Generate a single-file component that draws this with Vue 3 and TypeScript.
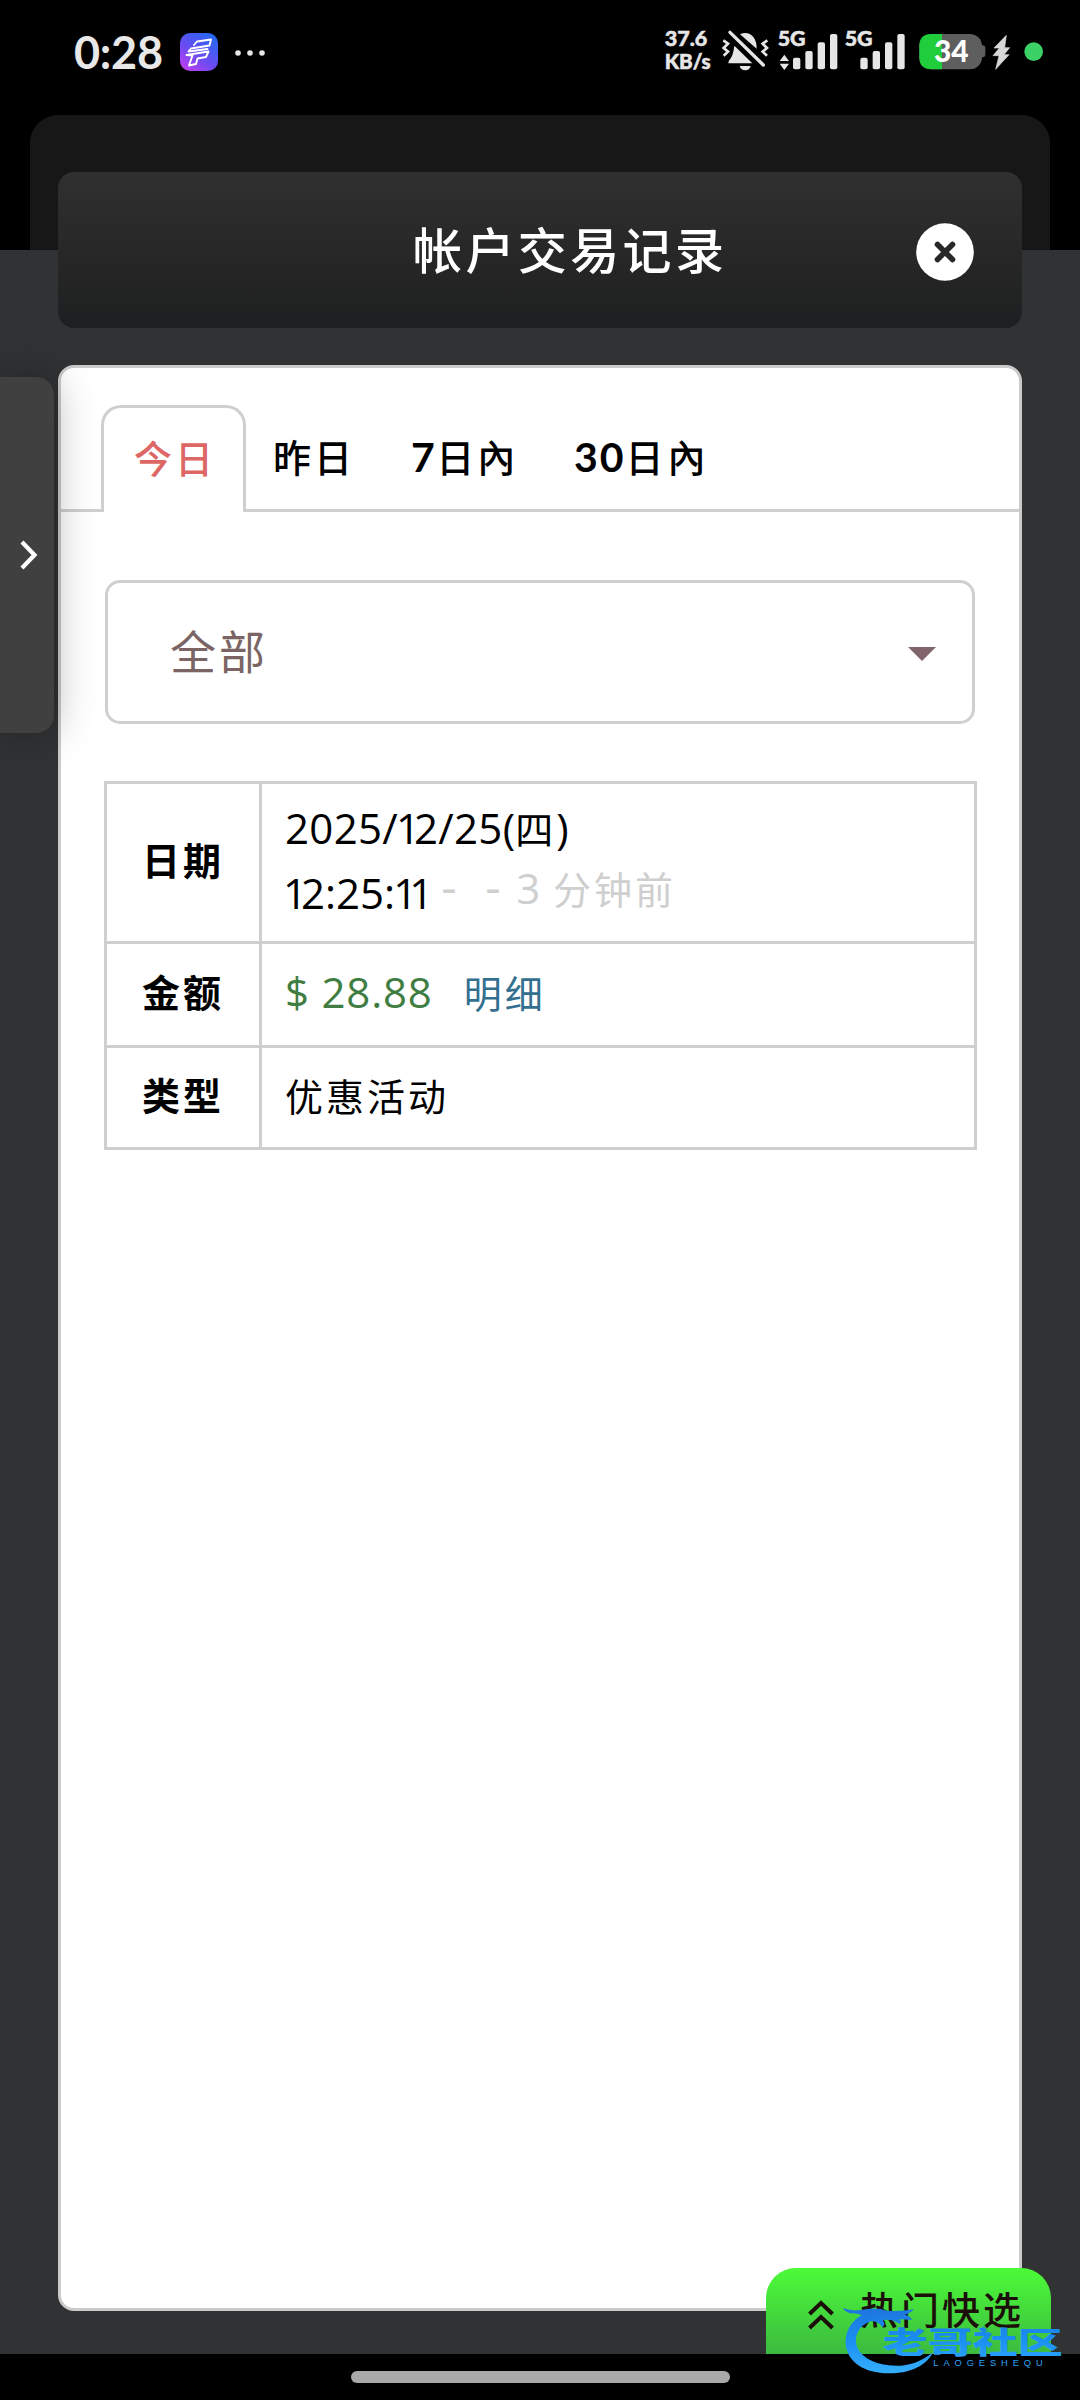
<script setup lang="ts">
import { ref } from 'vue'

interface Tab {
  id: string
  num: string
  label: string
}

const tabs: Tab[] = [
  { id: 'today', num: '', label: '今日' },
  { id: 'yesterday', num: '', label: '昨日' },
  { id: 'week', num: '7', label: '日內' },
  { id: 'month', num: '30', label: '日內' },
]
const active = ref<string>('today')

// the digit 1 is set tighter than the tabular figures around it
const pieces = (s: string): string[] => s.split(/(1)/).filter((p) => p !== '')
const day = pieces('2025/12/25(')
const time = pieces('12:25:11')
</script>

<template>
  <div class="screen">
    <header class="status">
      <span class="clock">0:28</span>
      <svg class="app-icon" viewBox="0 0 38 38">
        <defs>
          <linearGradient id="app-bg" x1="0.1" y1="1" x2="0.8" y2="0">
            <stop offset="0" stop-color="#c43cf0" />
            <stop offset="0.45" stop-color="#6a4cf2" />
            <stop offset="1" stop-color="#2468f0" />
          </linearGradient>
        </defs>
        <rect width="38" height="38" rx="10" fill="url(#app-bg)" />
        <g fill="none" stroke="#fff" stroke-width="1.9" stroke-linejoin="round" stroke-linecap="round">
          <path d="M14 12 L17 8.500 L31 6.500 L29.500 12.500 L11 15.500 L8.500 18.500 L27.500 16" />
          <path d="M6.500 22 L28.500 18.500 L26 24 L17.500 25.500 L16 31 L9 32.500 L12.500 22.500 L6.500 22" />
        </g>
      </svg>
      <svg class="dots" viewBox="0 0 30 6">
        <circle cx="3" cy="3" r="2.800" /><circle cx="15" cy="3" r="2.800" /><circle cx="27" cy="3" r="2.800" />
      </svg>
      <svg class="indicators" viewBox="0 0 1320 345" fill="#e6e6e6">
        <g class="net">
          <text x="74" y="138" font-size="65" textLength="128" lengthAdjust="spacingAndGlyphs">37.6</text>
          <text x="74" y="208" font-size="60" textLength="138" lengthAdjust="spacingAndGlyphs">KB/s</text>
          <text x="413" y="138" font-size="65" textLength="84" lengthAdjust="spacingAndGlyphs">5G</text>
          <text x="614" y="138" font-size="65" textLength="84" lengthAdjust="spacingAndGlyphs">5G</text>
        </g>
        <path d="M300 103 C326 90 351 110 350 146 Z" />
        <path d="M283 137 L337 190 H265 Q264 184 270 178 Q280 165 283 137 Z" />
        <path d="M299 198 H332 Q328 211 316 211 Q303 211 299 198 Z" />
        <path d="M270 97 L370 195" stroke="#e6e6e6" stroke-width="10" stroke-linecap="round" />
        <g fill="none" stroke="#e6e6e6" stroke-width="8" stroke-linejoin="miter">
          <path d="M250 121 L264 131 L251 144 L264 155 L251 167" />
          <path d="M382 121 L368 131 L381 144 L368 155 L381 167" />
        </g>
        <path d="M433 164 L447 183 H419 Z M419 191 H447 L433 210 Z" />
        <rect x="459" y="173" width="22" height="35" rx="6" />
        <rect x="496" y="153" width="22" height="55" rx="6" />
        <rect x="533" y="127" width="22" height="81" rx="6" />
        <rect x="570" y="102" width="22" height="106" rx="6" />
        <rect x="661" y="173" width="22" height="35" rx="6" />
        <rect x="698" y="153" width="22" height="55" rx="6" />
        <rect x="735" y="127" width="22" height="81" rx="6" />
        <rect x="772" y="102" width="22" height="106" rx="6" />
        <path d="M1022 136 H1028 Q1036 136 1036 146 V162 Q1036 172 1028 172 H1022 Z" fill="#5e5e5e" />
        <rect x="838" y="102" width="188" height="106" rx="36" fill="#5e5e5e" />
        <path d="M906 102 H874 Q838 102 838 138 V172 Q838 208 874 208 H906 Z" fill="#20cd3b" />
        <text class="pct" x="882" y="187" font-size="90" textLength="104" lengthAdjust="spacingAndGlyphs">34</text>
        <path d="M1099 106 L1062 144 H1078 L1059 167 H1077 L1067 208 L1107 164 H1092 L1109 143 H1094 Z" fill="#d8d8d8" stroke="#d8d8d8" stroke-width="2" />
        <circle cx="1181" cy="155" r="28" fill="#3bd167" />
      </svg>
    </header>

    <div class="sheet">
      <div class="title-bar">
        <h1>帐户交易记录</h1>
        <svg class="close" viewBox="0 0 58 58">
          <circle cx="29" cy="29" r="28.800" fill="#fff" />
          <path d="M21.500 21.500 L36.500 36.500 M36.500 21.500 L21.500 36.500" stroke="#282828" stroke-width="5.600" stroke-linecap="round" />
        </svg>
      </div>
    </div>

    <main class="card">
      <nav class="tabs">
        <button
          v-for="t in tabs"
          :key="t.id"
          class="tab"
          :class="[t.id, { active: t.id === active }]"
          @click="active = t.id"
        ><span v-if="t.num" class="num">{{ t.num }}</span>{{ t.label }}</button>
        <span class="rest"></span>
      </nav>

      <div class="select">
        <span>全部</span>
        <svg viewBox="0 0 28 14"><path d="M0 0 H28 L14 14 Z" fill="#80656a" /></svg>
      </div>

      <div class="table">
        <div class="row date">
          <div class="th">日期</div>
          <div class="td">
            <div class="line day"><span class="num"><span v-for="(p, i) in day" :key="i" :class="{ one: p === '1' }">{{ p }}</span></span>四<span class="num">)</span></div>
            <div class="line"><span class="num time"><span v-for="(p, i) in time" :key="i" :class="{ one: p === '1' }">{{ p }}</span></span><span class="ago"><i>-</i><i>-</i><span class="num">3</span> <b>分钟前</b></span></div>
          </div>
        </div>
        <div class="row amount">
          <div class="th">金额</div>
          <div class="td"><span class="num money">$ 28.88</span><a>明细</a></div>
        </div>
        <div class="row kind">
          <div class="th">类型</div>
          <div class="td">优惠活动</div>
        </div>
      </div>
    </main>

    <aside class="drawer">
      <svg viewBox="0 0 18 30"><path d="M2 2 L14.500 15 L2 28" fill="none" stroke="#fff" stroke-width="4.200" /></svg>
    </aside>

    <div class="hot">
      <svg viewBox="0 0 26 30"><path d="M1.500 14 L13 3 L24.500 14 M1.500 28 L13 17 L24.500 28" fill="none" stroke="#1c0f0a" stroke-width="4" /></svg>
      <span>热门快选</span>
    </div>

    <footer class="gesture"><span></span></footer>

    <svg class="mark" viewBox="0 0 1020 480">
      <defs>
        <linearGradient id="mark-fill" x1="0" y1="200" x2="0" y2="400" gradientUnits="userSpaceOnUse">
          <stop offset="0" stop-color="#1d74dc" />
          <stop offset="0.5" stop-color="#1a8ff2" />
          <stop offset="1" stop-color="#35aefc" />
        </linearGradient>
      </defs>
      <g fill="url(#mark-fill)">
        <path d="M368 224 C290 262 290 398 448 400 C512 400 562 374 578 338 C536 370 494 382 446 376 C340 362 316 284 392 236 Z" />
        <path d="M308 204 Q336 214 362 210 Q410 200 440 212 Q480 216 522 208 Q512 220 494 224 Q512 228 516 240 Q494 238 478 238 Q486 246 480 252 Q450 234 428 242 Q438 250 428 262 Q412 240 392 244 Q368 252 352 274 Q352 246 376 230 Q350 218 330 220 Q314 214 308 204 Z" />
        <text class="mark-cjk" x="428" y="338" font-size="88" textLength="540" lengthAdjust="spacingAndGlyphs">老哥社区</text>
        <text class="mark-en" x="580" y="378" font-size="28" textLength="328">LAOGESHEQU</text>
      </g>
    </svg>
  </div>
</template>

<style>
body { background: #000; }
</style>

<style scoped>
.screen {
  position: relative;
  width: 1080px;
  height: 2400px;
  overflow: hidden;
  display: flex;
  flex-direction: column;
  background: linear-gradient(#000 0 250px, #313234 250px 2354px, #000 2354px);
  font-family: "Lato", "Noto Sans CJK SC", sans-serif;
  color: #000;
}
.status { display: flex; height: 115px; flex: none; }
.clock {
  width: 106px;
  margin-left: 74px;
  font-size: 45px;
  font-weight: 700;
  letter-spacing: -0.3px;
  line-height: 104px;
  color: #e8e8e8;
}
.app-icon { width: 38px; height: 38px; margin-top: 33px; }
.dots { width: 30px; height: 6px; margin: 49.500px 0 0 17px; fill: #e6e6e6; }
.indicators { width: 440px; height: 115px; margin-left: auto; }
.net text { font-weight: 900; stroke: #e6e6e6; stroke-width: 1.5px; }
.pct { font-weight: 900; fill: #fff; }

.sheet {
  flex: none;
  height: 135px;
  margin: 0 30px;
  padding: 57px 28px 0;
  box-sizing: border-box;
  background: #171717;
  border-radius: 28px 28px 0 0;
}
.title-bar {
  display: flex;
  align-items: center;
  justify-content: space-between;
  height: 156px;
  padding: 0 48px 0 355px;
  box-sizing: border-box;
  border-radius: 16px;
  background: linear-gradient(#303030, #1e1f20);
}
h1 {
  margin: 0;
  font-size: 49px;
  font-weight: 500;
  letter-spacing: 3.400px;
  line-height: 60px;
  color: #fff;
  white-space: nowrap;
}
.close { width: 58px; height: 58px; margin-top: 3px; }

.card {
  flex: none;
  width: 964px;
  height: 1946px;
  margin: 115px 0 0 58px;
  box-sizing: border-box;
  border: 3px solid #cbcbcb;
  border-radius: 16px;
  background: #fff;
}
.tabs { display: flex; height: 144px; padding-top: 37px; box-sizing: border-box; }
.tabs::before { content: ""; width: 40px; border-bottom: 3px solid #cfcfcf; }
.tab {
  padding: 0;
  border: 0 solid #cfcfcf;
  border-bottom-width: 3px;
  background: none;
  font: 500 38px/70px "Lato", "Noto Sans CJK SC", sans-serif;
  letter-spacing: 3px;
  color: #000;
  text-align: left;
}
.tab .num { font-family: "Lato", sans-serif; font-weight: 700; font-size: 41px; letter-spacing: 1.500px; }
.tab.active {
  width: 145px;
  padding: 0 0 4px 30px;
  border-width: 3px 3px 0;
  border-radius: 20px 20px 0 0;
  color: #dd6765;
}
.tab.yesterday { width: 165px; padding-left: 27px; }
.tab.week { width: 163px; }
.tab.month { width: 150px; letter-spacing: 4px; }
.tab.month .num { letter-spacing: 2px; }
.rest { flex: 1; border-bottom: 3px solid #cfcfcf; }

.select {
  display: flex;
  align-items: center;
  justify-content: space-between;
  width: 870px;
  height: 144px;
  margin: 68px 0 0 44px;
  padding: 0 36px 0 62px;
  box-sizing: border-box;
  border: 3px solid #cfcfcf;
  border-radius: 15px;
  font-size: 46px;
  line-height: 60px;
  letter-spacing: 3px;
  color: #7b6564;
}
.select svg { width: 28px; height: 14px; margin-top: 3px; }

.table {
  width: 873px;
  margin: 57px 0 0 43px;
  box-sizing: border-box;
  border: 3px solid #cfcfcf;
  font-size: 38px;
  letter-spacing: 3px;
}
.row { display: flex; }
.row + .row { border-top: 3px solid #cfcfcf; }
.date { height: 157px; }
.amount { height: 101px; }
.kind { height: 99px; }
.th {
  display: flex;
  align-items: center;
  justify-content: center;
  width: 155px;
  box-sizing: border-box;
  border-right: 3px solid #cfcfcf;
  padding-bottom: 8px;
  font-weight: 700;
}
.td { padding-left: 23px; }
.amount .td { line-height: 95px; }
.kind .td { line-height: 97px; }
.num { font-family: "Open Sans", sans-serif; font-size: 42px; letter-spacing: 0; }
.line { height: 65px; line-height: 65px; white-space: nowrap; }
.day { padding-top: 11px; }
.day .num { letter-spacing: 0.300px; }
.num .one { margin-left: -2px; letter-spacing: -6px; }
.ago { position: relative; top: -5px; margin-left: 14px; color: #cfcfcf; }
.ago i { display: inline-block; width: 44px; font: 48px "Open Sans", sans-serif; line-height: 40px; }
.ago i + i { width: 31px; }
.ago b { font-weight: 400; }
.money { color: #3f7d42; letter-spacing: 0.800px; }
.amount a { margin-left: 31px; color: #33708f; }

.drawer {
  position: absolute;
  left: 0;
  top: 377px;
  width: 54px;
  height: 356px;
  box-sizing: border-box;
  padding: 163px 0 0 20px;
  border-radius: 0 18px 18px 0;
  background: #404040;
  box-shadow: 0 0 40px rgba(0, 0, 0, 0.3);
}
.drawer svg { display: block; width: 18px; height: 30px; }

.hot {
  position: absolute;
  left: 766px;
  top: 2268px;
  width: 285px;
  height: 86px;
  box-sizing: border-box;
  display: flex;
  padding-left: 42px;
  border-radius: 30px 30px 0 0;
  background: linear-gradient(#4cfb38, #3cba40);
  color: #1c0f0a;
  font-size: 38px;
  font-weight: 500;
  letter-spacing: 3px;
  line-height: 83px;
}
.hot svg { width: 26px; height: 30px; margin: 32px 26px 0 0; }

.gesture {
  display: flex;
  justify-content: center;
  height: 46px;
  margin-top: auto;
}
.gesture span { width: 379px; height: 12px; margin-top: 17px; border-radius: 6px; background: #a9a9a9; }

.mark { position: absolute; left: 740px; top: 2240px; width: 340px; height: 160px; }
.mark-cjk { font-family: "Noto Sans CJK SC", sans-serif; font-weight: 900; }
.mark-en { font-family: "Liberation Sans", sans-serif; font-weight: 400; }
</style>
